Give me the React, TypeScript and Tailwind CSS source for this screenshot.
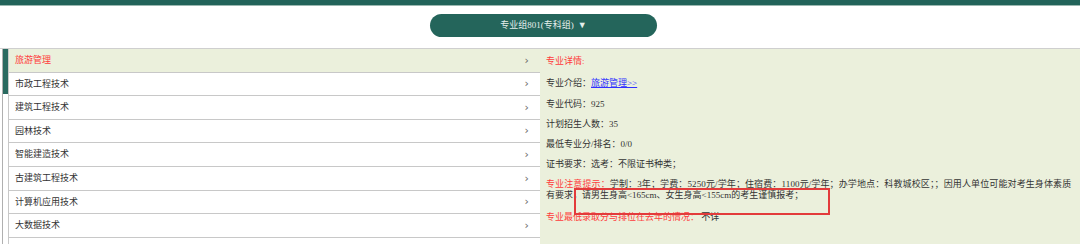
const majors = [
  "旅游管理",
  "市政工程技术",
  "建筑工程技术",
  "园林技术",
  "智能建造技术",
  "古建筑工程技术",
  "计算机应用技术",
  "大数据技术",
  "",
]

export default function App() {
  return (
    <div className="w-[1080px] h-[244px] overflow-hidden bg-white text-[9px] text-[#333] font-['Liberation_Serif','Noto_Sans_CJK_SC',serif]">
      {/* top bar */}
      <div className="h-[6px] bg-[#22635a] border-b border-[#9bb8b1]" />

      {/* group selector */}
      <div className="h-[42px] flex justify-center pt-[8px] pl-[7px]">
        <div className="w-[227px] h-[23px] rounded-full bg-[#24655b] text-[#e6eeec] flex items-center justify-center gap-[4px]">
          <span>专业组801(专科组)</span>
          <span className="text-[9px]">▼</span>
        </div>
      </div>

      <div className="flex border-t border-[#cfcfcf] h-[196px]">
        {/* scrollbar */}
        <div className="w-[8px] pl-[2px] shrink-0">
          <div className="h-full border-l border-[#b0b0b0]">
            <div className="h-[45px] bg-[#2a6a60]" />
          </div>
        </div>

        {/* major list */}
        <div className="w-[532px] shrink-0 border-l border-[#c8c8c8]">
          {majors.map((m, i) => (
            <div
              key={i}
              className={
                i === 0
                  ? "h-[23.6px] border-b border-[#c8c8c8] bg-[#ebf0dc] flex items-center justify-between pl-[6px] pr-[11px] pt-[1px] text-[#ff3b3b]"
                  : "h-[23.6px] border-b border-[#c8c8c8] bg-white flex items-center justify-between pl-[6px] pr-[11px] pt-[1px]"
              }
            >
              <span>{m}</span>
              <span className="text-[#666] text-[11px] font-['DejaVu_Sans',sans-serif]">{m ? "›" : ""}</span>
            </div>
          ))}
        </div>

        {/* detail */}
        <div className="relative flex-1 bg-[#ebf0dc] pl-[6px] pt-[6px] flex flex-col gap-[8.3px] leading-[12px]">
          <div className="text-[#ff3b3b]">专业详情:</div>
          <div className="mt-[2px]">
            专业介绍：<span className="text-[#3030ff] underline">旅游管理&gt;&gt;</span>
          </div>
          <div>专业代码：925</div>
          <div>计划招生人数：35</div>
          <div>最低专业分/排名：0/0</div>
          <div>证书要求：选考：不限证书种类；</div>
          <div className="leading-[11.5px]">
            <div className="whitespace-nowrap tracking-[0.12px]">
              <span className="text-[#ff3b3b]">专业注意提示：</span>
              学制：3年；学费：5250元/学年；住宿费：1100元/学年；办学地点：科教城校区；；因用人单位可能对考生身体素质
            </div>
            <div className="whitespace-nowrap">有要求，请男生身高&lt;165cm、女生身高&lt;155cm的考生谨慎报考；</div>
          </div>
          <div className="mt-[1px]">
            <span className="text-[#ff3b3b]">专业最低录取分与排位在去年的情况：</span> 不详
          </div>

          {/* annotation box */}
          <div className="absolute left-[34px] top-[139px] w-[256px] h-[27px] border-2 border-[#e33b3b]" />
        </div>
      </div>
    </div>
  )
}
